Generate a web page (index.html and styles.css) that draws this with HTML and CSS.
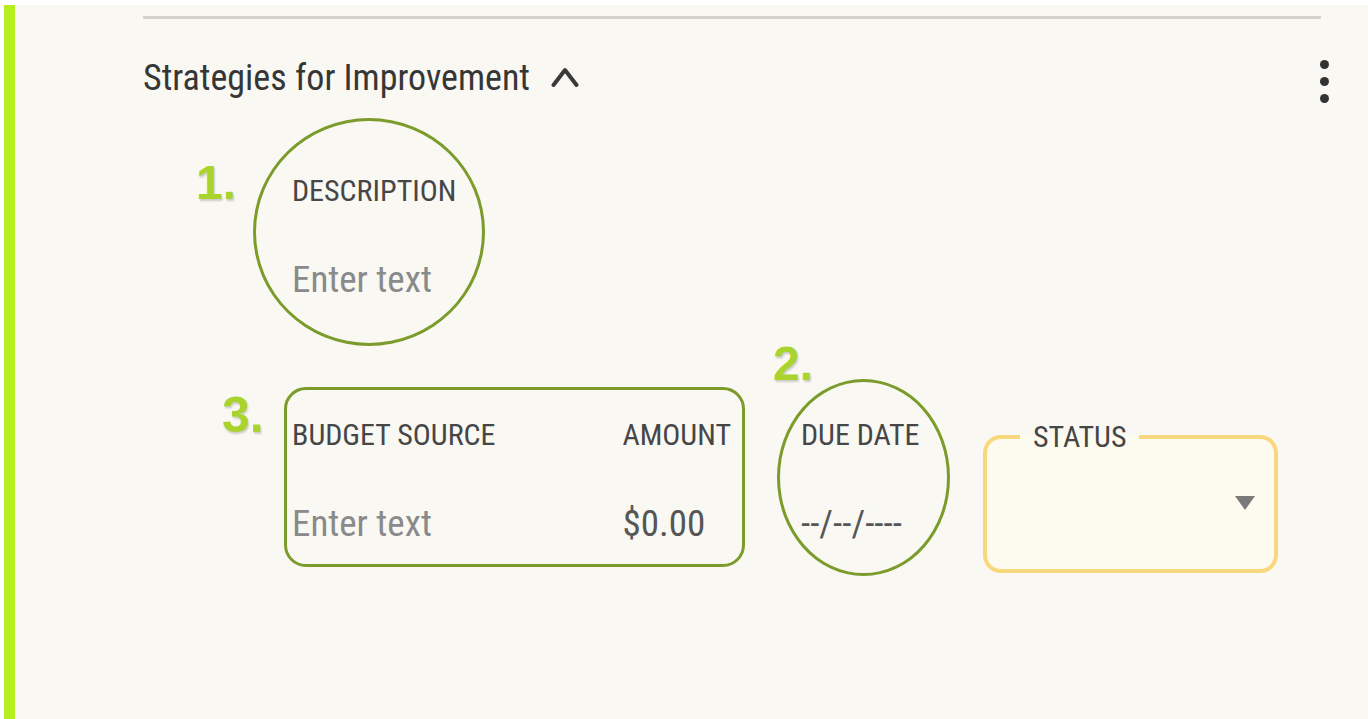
FILE: index.html
```html
<!DOCTYPE html>
<html lang="en">
<head>
<meta charset="utf-8">
<title>Strategies for Improvement</title>
<link rel="stylesheet" href="styles.css">
</head>
<body>
<div class="page">
  <section class="panel">
    <div class="panel-inner">
      <hr class="divider">

      <header class="panel-head">
        <h2 class="panel-title">Strategies for Improvement</h2>
        <svg class="chevron" width="28" height="22" viewBox="0 0 28 22" aria-hidden="true">
          <path d="M2.5 19 L14 4 L25.5 19" fill="none" stroke="#3a3a3a" stroke-width="4" stroke-linecap="round" stroke-linejoin="round"/>
        </svg>
        <button class="kebab" type="button" aria-label="More options">
          <span class="dot"></span><span class="dot"></span><span class="dot"></span>
        </button>
      </header>

      <div class="field field--description">
        <span class="step step--one">1.</span>
        <span class="ring ring--description"></span>
        <label class="field-label">DESCRIPTION</label>
        <div class="field-value is-placeholder">Enter text</div>
      </div>

      <div class="field-row">
        <div class="budget">
          <span class="step step--three">3.</span>
          <span class="ring ring--budget"></span>
          <div class="field field--source">
            <label class="field-label">BUDGET SOURCE</label>
            <div class="field-value is-placeholder">Enter text</div>
          </div>
          <div class="field field--amount">
            <label class="field-label">AMOUNT</label>
            <div class="field-value">$0.00</div>
          </div>
        </div>

        <div class="field field--date">
          <span class="step step--two">2.</span>
          <span class="ring ring--date"></span>
          <label class="field-label">DUE DATE</label>
          <div class="field-value">--/--/----</div>
        </div>

        <fieldset class="status">
          <legend class="status-legend">STATUS</legend>
          <span class="caret"></span>
        </fieldset>
      </div>
    </div>
  </section>
</div>
</body>
</html>
```

FILE: styles.css
```css
* {
  box-sizing: border-box;
}

html,
body {
  margin: 0;
  background: #ffffff;
}

body {
  font-family: "Roboto Condensed", "DejaVu Sans", sans-serif;
  color: #474747;
}

.page {
  padding: 5px 0 0 4px;
  height: 719px;
  overflow: hidden;
}

.panel {
  height: 714px;
  background: #f9f8f3;
  border-left: 11px solid #b6ef1f;
}

.panel-inner {
  padding: 11px 47px 0 128px;
}

.divider {
  margin: 0;
  border: 0;
  height: 3px;
  background: #d3d2cd;
}

/* header: title, collapse chevron and overflow menu */
.panel-head {
  display: flex;
  align-items: center;
  margin-top: 39px;
  height: 40px;
}

.panel-title {
  margin: 0;
  font-size: 36px;
  line-height: 40px;
  font-weight: normal;
  color: #363636;
  white-space: nowrap;
}

.chevron {
  margin-left: 21px;
  margin-top: -2px;
}

.kebab {
  margin-left: auto;
  margin-right: -8px;
  margin-top: 6px;
  padding: 0;
  border: 0;
  background: none;
  display: flex;
  flex-direction: column;
  gap: 8px;
  cursor: pointer;
}

.dot {
  display: block;
  width: 9px;
  height: 9px;
  border-radius: 50%;
  background: #333333;
}

/* form fields */
.field {
  position: relative;
}

.field-label {
  display: block;
  font-size: 30px;
  line-height: 30px;
  color: #464646;
  white-space: nowrap;
}

.field-value {
  margin-top: 54px;
  font-size: 37px;
  line-height: 40px;
  color: #565656;
  white-space: nowrap;
}

.field-value.is-placeholder {
  color: #8a8a8a;
}

.field--description {
  margin: 78px 0 0 149px;
  width: 200px;
}

.field-row {
  display: flex;
  align-items: flex-start;
  margin-top: 120px;
}

.budget {
  position: relative;
  display: flex;
  margin-left: 149px;
  width: 439px;
}

.field--source {
  width: 331px;
}

.field--date {
  margin-left: 70px;
  width: 125px;
}

/* status select */
.status {
  position: relative;
  margin: 2px 0 0 57px;
  padding: 0 19px 0 33px;
  width: 295px;
  height: 151px;
  border: 4px solid #f7d87c;
  border-radius: 18px;
  background: #fdfbef;
  display: flex;
  justify-content: flex-end;
}

.status-legend {
  padding: 0 13px;
  font-size: 30px;
  line-height: 30px;
  color: #464646;
}

.caret {
  margin-top: 44px;
  width: 0;
  height: 0;
  border-left: 10px solid transparent;
  border-right: 10px solid transparent;
  border-top: 14px solid #7a7a7a;
}

/* annotation marks drawn over the form */
.ring {
  position: absolute;
  border: 3px solid #7b9c2a;
  pointer-events: none;
}

.ring--description {
  left: -39px;
  top: -58px;
  width: 232px;
  height: 228px;
  border-radius: 50%;
}

.ring--budget {
  left: -8px;
  top: -33px;
  width: 461px;
  height: 180px;
  border-radius: 22px;
}

.ring--date {
  left: -24px;
  top: -41px;
  width: 173px;
  height: 197px;
  border-radius: 50%;
}

.step {
  position: absolute;
  font-family: "Liberation Sans", "DejaVu Sans", sans-serif;
  font-weight: bold;
  font-size: 48px;
  line-height: 48px;
  color: #a9d42e;
  text-shadow: 1px 2px 2px rgba(0, 0, 0, 0.18);
}

.step--one {
  left: -96px;
  top: -17px;
}

.step--three {
  left: -70px;
  top: -30px;
  font-size: 50px;
  line-height: 50px;
}

.step--two {
  left: -28px;
  top: -80px;
}
```
